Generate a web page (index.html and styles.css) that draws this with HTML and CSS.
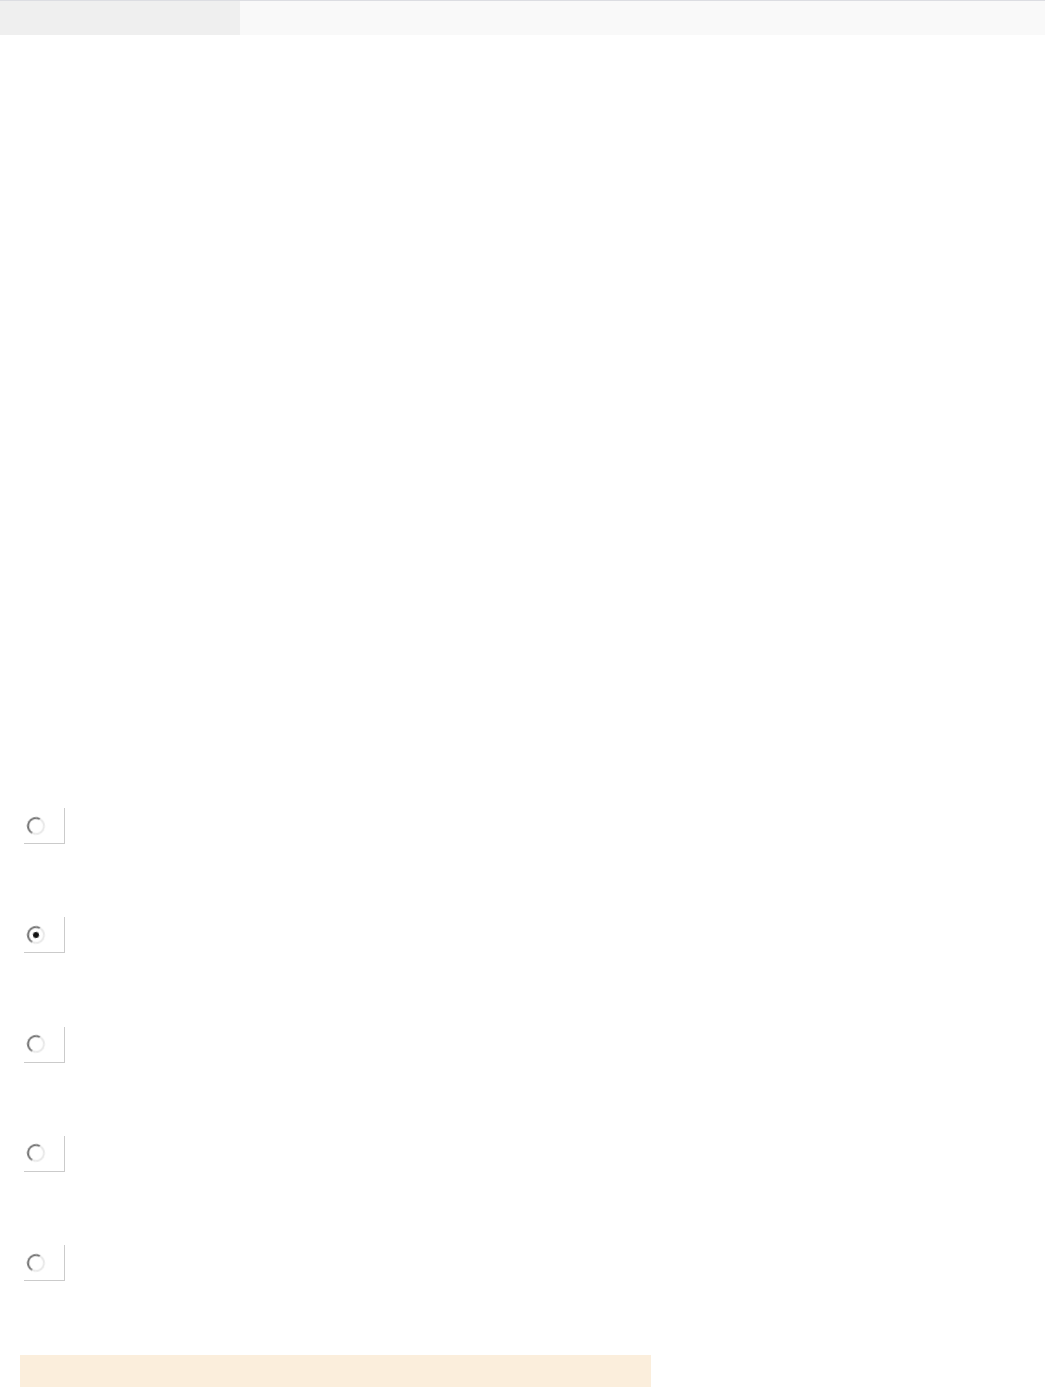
FILE: index.html
```html
<!DOCTYPE html>
<html lang="en">
<head>
    <meta charset="UTF-8">
    <title>Quiz</title>
    <link rel="stylesheet" href="styles.css">
</head>
<body>
    <div class="topbar">
        <div class="tab-active"></div>
        <div class="tab-rest"></div>
    </div>

    <form class="quiz">
        <div class="choices">
            <label class="choice"><input type="radio" name="answer" value="a"><span class="dot"></span></label>
            <label class="choice"><input type="radio" name="answer" value="b" checked><span class="dot"></span></label>
            <label class="choice"><input type="radio" name="answer" value="c"><span class="dot"></span></label>
            <label class="choice"><input type="radio" name="answer" value="d"><span class="dot"></span></label>
            <label class="choice"><input type="radio" name="answer" value="e"><span class="dot"></span></label>
        </div>
        <div class="notice"></div>
    </form>
</body>
</html>
```

FILE: styles.css
```css
body { margin: 0; font-family: "Liberation Sans", Arial, sans-serif; background: #fff; }
.topbar { display: flex; height: 34px; border-top: 1px solid #dcdde2; }
.tab-active { width: 240px; background: #efefef; }
.tab-rest { flex: 1; background: #f9f9f9; }
.quiz { padding: 773px 0 0 20px; }
.choices { display: flex; flex-direction: column; gap: 73.25px; padding-left: 4px; }
.choice { display: flex; align-items: center; width: 41px; height: 36px; padding-left: 3px; box-sizing: border-box; border-right: 1px solid #cbcbcb; border-bottom: 1px solid #cbcbcb; }
.choice input { display: none; }
.dot { position: relative; width: 14px; height: 14px; border-radius: 50%; border: 2px solid; border-color: #707070 #e8e8e8 #e8e8e8 #707070; background: #fff; transform: rotate(-15deg); filter: blur(0.3px); }
.choice input:checked + .dot::after { content: ""; position: absolute; left: 4px; top: 4px; width: 6px; height: 6px; border-radius: 50%; background: #111; }
.notice { margin-top: 74px; width: 631px; height: 40px; background: #fbeedc; }
```
